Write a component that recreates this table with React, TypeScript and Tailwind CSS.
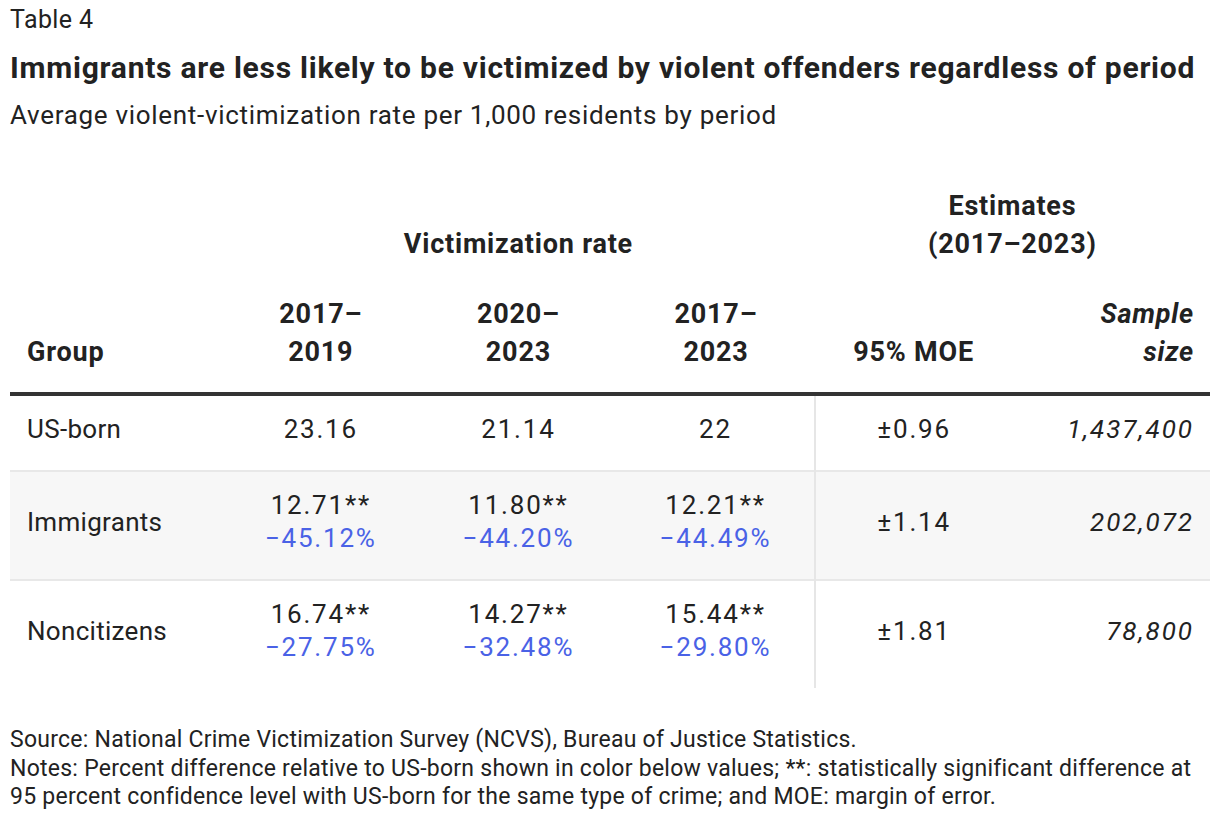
const FONT = "font-['Roboto','Liberation_Sans',sans-serif]"

type Row = {
  group: string
  values: Array<{ value: string; diff?: string }>
  moe: string
  sample: string
  shaded?: boolean
}

const ROWS: Row[] = [
  { group: 'US-born', values: [{ value: '23.16' }, { value: '21.14' }, { value: '22' }], moe: '±0.96', sample: '1,437,400' },
  {
    group: 'Immigrants',
    values: [
      { value: '12.71**', diff: '−45.12%' },
      { value: '11.80**', diff: '−44.20%' },
      { value: '12.21**', diff: '−44.49%' },
    ],
    moe: '±1.14',
    sample: '202,072',
    shaded: true,
  },
  {
    group: 'Noncitizens',
    values: [
      { value: '16.74**', diff: '−27.75%' },
      { value: '14.27**', diff: '−32.48%' },
      { value: '15.44**', diff: '−29.80%' },
    ],
    moe: '±1.81',
    sample: '78,800',
  },
]

export default function App() {
  return (
    <div className={`min-h-[824px] w-[1220px] bg-white px-[10px] pt-[6px] text-[#222] ${FONT}`}>
      <div className="text-[25px] leading-[28px] tracking-[0.4px]">Table 4</div>
      <h1 className="mt-[16px] text-[30px] font-bold leading-[36px] tracking-[0.75px]">
        Immigrants are less likely to be victimized by violent offenders regardless of period
      </h1>
      <p className="mt-[14px] text-[26px] leading-[30px] tracking-[0.7px]">
        Average violent-victimization rate per 1,000 residents by period
      </p>

      <table className="mt-[54px] w-[1200px] table-fixed border-collapse">
        <colgroup>
          <col className="w-[212px]" />
          <col />
          <col />
          <col />
          <col />
          <col />
        </colgroup>
        <thead className="text-[27px] font-extrabold leading-[38px] tracking-[0.8px]">
          <tr>
            <th />
            <th colSpan={3} className="pt-[3px] text-center align-bottom">
              Victimization rate
            </th>
            <th colSpan={2} className="pt-[3px] text-center align-bottom">
              Estimates
              <br />
              (2017–2023)
            </th>
          </tr>
          <tr className="border-b-[4px] border-[#333]">
            <th className="pt-[32px] pb-[21px] pl-[17px] text-left align-bottom">Group</th>
            <th className="pt-[32px] pb-[21px] text-center align-bottom">
              2017–
              <br />
              2019
            </th>
            <th className="pt-[32px] pb-[21px] text-center align-bottom">
              2020–
              <br />
              2023
            </th>
            <th className="pt-[32px] pb-[21px] text-center align-bottom">
              2017–
              <br />
              2023
            </th>
            <th className="pt-[32px] pb-[21px] text-center align-bottom">95% MOE</th>
            <th className="pt-[32px] pb-[21px] pr-[16px] text-right align-bottom italic">
              Sample
              <br />
              size
            </th>
          </tr>
        </thead>
        <tbody className="text-[26px] leading-[33px]">
          {ROWS.map((row, i) => (
            <tr
              key={row.group}
              className={`${row.shaded ? 'bg-[#f7f7f7]' : ''} ${i < ROWS.length - 1 ? 'border-b-2 border-[#e8e8e8]' : ''}`}
            >
              <td className="pt-[17px] pb-[24px] pl-[17px] align-middle tracking-[0.3px]">{row.group}</td>
              {row.values.map((v, j) => (
                <td key={j} className="pt-[17px] pb-[24px] text-center align-middle tracking-[1.8px]">
                  <div>{v.value}</div>
                  {v.diff && <div className="text-[#4a62e6]">{v.diff}</div>}
                </td>
              ))}
              <td className="border-l-2 border-[#e6e6e6] pt-[17px] pb-[24px] text-center align-middle tracking-[1.8px]">
                {row.moe}
              </td>
              <td className="pt-[17px] pb-[24px] pr-[16px] text-right align-middle italic tracking-[2px]">{row.sample}</td>
            </tr>
          ))}
        </tbody>
      </table>

      <div className="mt-[38px] text-[23px] leading-[28.5px] tracking-[0.25px]">
        <p>Source: National Crime Victimization Survey (NCVS), Bureau of Justice Statistics.</p>
        <p>
          Notes: Percent difference relative to US-born shown in color below values; **: statistically significant difference at 95
          percent confidence level with US-born for the same type of crime; and MOE: margin of error.
        </p>
      </div>
    </div>
  )
}
